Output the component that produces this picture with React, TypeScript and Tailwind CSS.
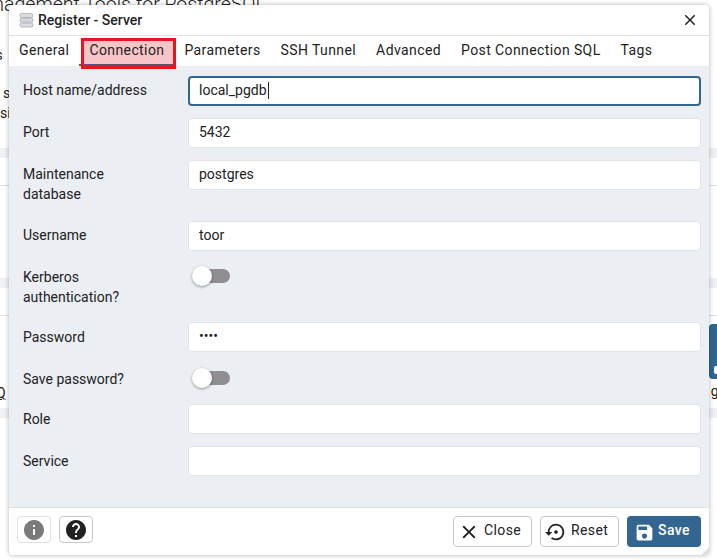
import { MdClose, MdHelp, MdInfo, MdSave, MdSettingsBackupRestore } from "react-icons/md";

const tabs = ["General", "Connection", "Parameters", "SSH Tunnel", "Advanced", "Post Connection SQL", "Tags"];

type Row = {
  label: string[];
  value?: string;
  toggle?: string;
  height: string;
  labelTop?: string;
  focused?: boolean;
};

const rows: Row[] = [
  { label: ["Host name/address"], value: "local_pgdb", height: "h-[30px]", focused: true },
  { label: ["Port"], value: "5432", height: "h-[30px]" },
  { label: ["Maintenance", "database"], value: "postgres", height: "h-[49px]" },
  { label: ["Username"], value: "toor", height: "h-[30px]" },
  { label: ["Kerberos", "authentication?"], toggle: "mt-[6px]", height: "h-[47px]" },
  { label: ["Password"], value: "••••", height: "h-[30px]", labelTop: "pt-[5px]" },
  { label: ["Save password?"], toggle: "mt-[7px]", height: "h-[28px]", labelTop: "pt-[5px]" },
  { label: ["Role"], value: "", height: "h-[30px]", labelTop: "pt-[5px]" },
  { label: ["Service"], value: "", height: "h-[30px]", labelTop: "pt-[5px]" },
];

function Toggle({ offset }: { offset: string }) {
  return (
    <div className={`relative ml-[6px] h-[14px] w-[36px] rounded-full bg-[#8e8e93] ${offset}`}>
      <div className="absolute -left-[2px] -top-[3px] h-5 w-5 rounded-full bg-white shadow-[0_1px_3px_rgba(0,0,0,0.4)]" />
    </div>
  );
}

function FormRow({ row }: { row: Row }) {
  return (
    <div className={`flex ${row.height}`}>
      <div className={`w-[165px] shrink-0 leading-5 ${row.labelTop ?? "pt-[4px]"}`}>
        {row.label.map((l) => (
          <div key={l}>{l}</div>
        ))}
      </div>
      {row.toggle ? (
        <Toggle offset={row.toggle} />
      ) : (
        <div
          className={`flex h-[30px] flex-1 items-center rounded-[4px] bg-white pb-px ${
            row.focused ? "border-2 border-[#326690] pl-[9px]" : "border border-[#e1e5ea] pl-[10px]"
          }`}
        >
          {row.value}
          {row.focused && <span className="ml-px h-[17px] w-px bg-[#222]" />}
        </div>
      )}
    </div>
  );
}

/** Dialog over the pgAdmin welcome page. */
export default function App() {
  return (
    <div className="relative h-[560px] w-[717px] overflow-hidden bg-white font-['Roboto',sans-serif] text-[14px] text-[#222]">
      {/* page behind the dialog */}
      <div className="-ml-[34px] -mt-[9px] w-[790px] text-[#222]">
        <div className="h-[54px] text-[19.5px] font-light leading-[28px]">
          Management Tools for PostgreSQL
        </div>
        <div className="h-[12px] pl-[26px] leading-5">is</div>
        <div className="flex h-[91px] flex-col">
          <div className="flex justify-between pl-[19px] pr-[27px] pt-[26px] leading-5">
            <span className="pl-[18px]">s</span>
            <span>n</span>
          </div>
          <div className="pl-[34px] leading-5">si</div>
        </div>
        <div className="h-[10px] bg-[#eef0f3]" />
        <div className="h-[28px] border-b border-[#dde0e6]" />
        <div className="h-[92px]" />
        <div className="h-[10px] bg-[#eef0f3]" />
        <div className="h-[28px] border-b border-[#dde0e6]" />
        <div className="flex h-[92px] justify-between pl-[30px] pr-[23px] pt-[8px]">
          <span className="self-end pb-[5px] leading-5 underline">Q</span>
          <div className="flex w-[32px] flex-col items-center">
            <div className="relative h-[55px] w-[24px] self-end rounded-[4px] bg-[#326690]">
              <div className="absolute left-[5px] top-[42px] h-[8px] w-[8px] rounded-[2px] bg-white" />
            </div>
            <span className="mt-[4px] leading-4 underline">gr</span>
          </div>
        </div>
        <div className="h-[10px] bg-[#eef0f3]" />
      </div>

      {/* dialog */}
      <div className="absolute left-[9px] top-[5px] flex h-[550px] w-[700px] flex-col overflow-hidden rounded-[4px] bg-white shadow-[0_0_5px_rgba(0,0,0,0.3)]">
        <div className="flex h-[31px] shrink-0 items-center border-b border-[#dde0e6] pl-[10px] pr-[10px]">
          <svg width="15" height="16" viewBox="0 0 15 16" className="mr-[4px]">
            <rect x="1" y="1.5" width="13" height="4" rx="1.5" fill="#dcdde0" stroke="#a9abb0" strokeWidth="0.8" />
            <rect x="1" y="6.2" width="13" height="4" rx="1.5" fill="#d4d6e4" stroke="#a9abb0" strokeWidth="0.8" />
            <rect x="1" y="11" width="13" height="4" rx="1.5" fill="#dcdde0" stroke="#a9abb0" strokeWidth="0.8" />
          </svg>
          <span className="flex-1 font-medium leading-5">Register - Server</span>
          <MdClose size={18} />
        </div>
        <div className="flex h-[30px] shrink-0 items-stretch bg-white tracking-[0.4px]">
          {tabs.map((t) => (
            <div
              key={t}
              className={`relative flex items-center px-[10px] pb-[2px] ${t === "Connection" ? "border-b-2 border-[#326690] !pb-0" : ""}`}
            >
              {t === "Connection" && (
                <span className="absolute -bottom-[5px] -right-[2px] left-[2px] top-[2px] border-[3px] border-[#e8141f] bg-[#e8141f]/25" />
              )}
              <span className="relative">{t}</span>
            </div>
          ))}
        </div>
        <div className="flex flex-1 flex-col gap-3 bg-[#ebeef3] pl-[14px] pr-[8px] pt-[10px]">
          {rows.map((r) => (
            <FormRow key={r.label[0]} row={r} />
          ))}
        </div>
        <div className="flex h-[48px] shrink-0 items-start justify-between border-t border-[#dde0e6] px-[8px] pt-[8px]">
          <div className="flex gap-[8px]">
            <div className="flex h-[27px] w-[34px] items-center justify-center rounded-[4px] border border-[#dde0e6]">
              <MdInfo size={24} className="text-[#7a7a7a]" />
            </div>
            <div className="flex h-[27px] w-[34px] items-center justify-center rounded-[4px] border border-[#c4c8d0]">
              <MdHelp size={24} className="text-[#222]" />
            </div>
          </div>
          <div className="flex gap-2 tracking-[0.4px]">
            <div className="flex h-[31px] w-[79px] items-center gap-[4px] rounded-[4px] border border-[#c4c8d0] pb-[2px] pl-[4px]">
              <MdClose size={22} className="mt-[3px]" />
              Close
            </div>
            <div className="flex h-[31px] w-[79px] items-center gap-[4px] rounded-[4px] border border-[#c4c8d0] pb-[2px] pl-[4px]">
              <MdSettingsBackupRestore size={22} className="mt-[3px]" />
              Reset
            </div>
            <div className="flex h-[31px] w-[74px] items-center gap-[3px] rounded-[4px] bg-[#326690] pb-[2px] pl-[7px] font-medium text-white">
              <MdSave size={21} className="mt-[3px]" />
              Save
            </div>
          </div>
        </div>
        <svg width="8" height="8" viewBox="0 0 8 8" className="absolute bottom-0 right-0">
          <path d="M8 0V8H0Z" fill="#dde0e6" />
        </svg>
      </div>
    </div>
  );
}
